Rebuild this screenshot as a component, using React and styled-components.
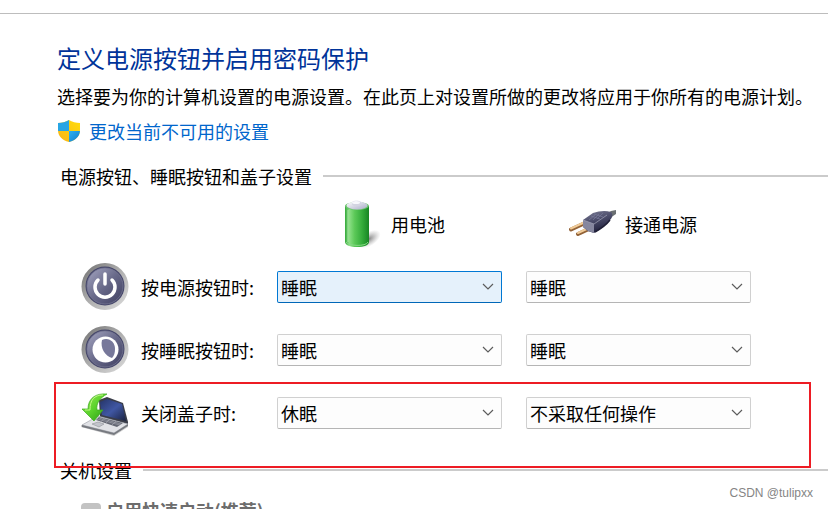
import React from "react";
import styled, { createGlobalStyle, css } from "styled-components";

const GlobalStyle = createGlobalStyle`
  * { box-sizing: border-box; }
  body {
    margin: 0;
    background: #fff;
    color: #000;
    font-family: "Noto Sans CJK SC", sans-serif;
    font-size: 18px;
    line-height: 24px;
  }
`;

const Window = styled.div`
  position: relative;
  height: 100vh;
  overflow: hidden;
`;

const TopBar = styled.header`
  height: 14px;
  border-bottom: 1px solid #bdbdbd;
`;

const Page = styled.main`
  display: flex;
  flex-direction: column;
  padding: 28px 0 0 57px;
`;

const Title = styled.h1`
  margin: 0;
  font-size: 24px;
  font-weight: 400;
  line-height: 32px;
  color: #003399;
`;

const Intro = styled.p`
  margin: 10px 0;
`;

const AdminLink = styled.a`
  display: flex;
  align-items: center;
  align-self: flex-start;
  gap: 8px;
  margin-top: 1px;
  color: #0066cc;
  text-decoration: none;
`;

const Section = styled.section`
  margin-top: 21px;
`;

const SectionHeading = styled.h2`
  display: flex;
  align-items: center;
  gap: 11px;
  margin: 0;
  padding-left: 3px;
  font-size: 18px;
  font-weight: 400;
  line-height: 24px;

  &::after {
    content: "";
    flex: 1;
    height: 2px;
    background: #cbcbcb;
  }
`;

const Settings = styled.div`
  display: flex;
  flex-direction: column;
  gap: 15px;
  margin-top: 12px;
  padding: 0 24px;
`;

const SettingRow = styled.div`
  position: relative;
  display: grid;
  grid-template-columns: 48px 124px minmax(0, 225px) minmax(0, 225px);
  column-gap: 12px;
  align-items: center;
  height: 48px;
`;

const SourceHeader = styled.div`
  grid-column: ${(p) => p.$column};
  display: flex;
  align-items: center;
  gap: 8px;
  padding-left: ${(p) => p.$inset}px;
  white-space: nowrap;
`;

const SecondField = styled.div`
  padding-left: 12px;
  margin-right: -12px;
`;

const SelectBox = styled.div`
  position: relative;
  display: flex;
  align-items: center;

  svg {
    position: absolute;
    right: 8px;
    pointer-events: none;
  }
`;

const Select = styled.select`
  appearance: none;
  width: 100%;
  height: 32px;
  padding: 0 28px 0 3px;
  border: 1px solid #d0d0d0;
  border-bottom-color: #b5b5b5;
  border-radius: 2px;
  background: #fdfdfd;
  color: #000;
  font: inherit;
  outline: none;
  ${(p) =>
    p.$active &&
    css`
      border-color: #0078d4;
      border-bottom-color: #0067b8;
      background: #e5f1fb;
    `}
`;

const Highlight = styled.div`
  position: absolute;
  top: -7px;
  left: -27px;
  right: -7px;
  height: 86px;
  border: 2px solid #ed1c24;
  pointer-events: none;
  z-index: 1;
`;

const CheckRow = styled.label`
  display: flex;
  align-items: center;
  gap: 5px;
  margin-top: 15px;
  padding-left: 24px;
  color: #6d6d6d;
  font-weight: 700;
`;

const Checkbox = styled.input`
  appearance: none;
  width: 20px;
  height: 20px;
  margin: 6px 0 0;
  border-radius: 4px;
  background: #c3c3c3;
`;

const Watermark = styled.span`
  position: absolute;
  right: 15px;
  bottom: 8px;
  color: #858585;
  font-family: "Liberation Sans", sans-serif;
  font-size: 12px;
  line-height: 16px;
`;

function ShieldIcon() {
  return (
    <svg width="24" height="24" viewBox="0 0 24 24" aria-hidden="true">
      <defs>
        <clipPath id="shield">
          <path d="M12 1c3 2 7 3 11 3v7c0 6-4 10-11 12C5 21 1 17 1 11V4c4 0 8-1 11-3z" />
        </clipPath>
        <linearGradient id="shieldBlue" x1="0" y1="0" x2="1" y2="1">
          <stop offset="0" stopColor="#2fb1ee" />
          <stop offset="1" stopColor="#0b78cc" />
        </linearGradient>
        <linearGradient id="shieldGold" x1="1" y1="0" x2="0" y2="1">
          <stop offset="0" stopColor="#ffdf0b" />
          <stop offset="1" stopColor="#f9b216" />
        </linearGradient>
      </defs>
      <g clipPath="url(#shield)">
        <path d="M0 0h24v24H0z" fill="url(#shieldGold)" />
        <path d="M0 0h12v12H0z" fill="#27a5e4" />
        <path d="M12 12h12v12H12z" fill="url(#shieldBlue)" />
      </g>
    </svg>
  );
}

function BatteryIcon() {
  return (
    <svg width="48" height="48" viewBox="0 0 48 48" aria-hidden="true">
      <defs>
        <linearGradient id="cell">
          <stop offset="0" stopColor="#35a83b" />
          <stop offset=".18" stopColor="#8bdf85" />
          <stop offset=".4" stopColor="#5cc958" />
          <stop offset=".72" stopColor="#33ab3a" />
          <stop offset="1" stopColor="#178524" />
        </linearGradient>
        <radialGradient id="cellShadow">
          <stop offset="0" stopColor="#666" stopOpacity=".8" />
          <stop offset="1" stopColor="#999" stopOpacity="0" />
        </radialGradient>
        <linearGradient id="cellCap" x2="1" y2="1">
          <stop offset="0" stopColor="#fff" />
          <stop offset="1" stopColor="#a9abc7" />
        </linearGradient>
      </defs>
      <ellipse cx="34" cy="39" rx="13" ry="7" transform="rotate(-32 34 39)" fill="url(#cellShadow)" />
      <path d="M10 6v36c0 3 5 5 12 5s12-2 12-5V6z" fill="url(#cell)" />
      <ellipse cx="22" cy="6" rx="12" ry="4" fill="#6cc46e" />
      <ellipse cx="22" cy="5.5" rx="10.5" ry="4" fill="url(#cellCap)" />
      <path d="M17 2.5c0-2.5 9-2.5 9 0v2c-1 2-8 2-9 0z" fill="#d3d4e2" />
      <ellipse cx="21" cy="2.5" rx="4" ry="1.5" fill="#f7f7fc" />
      <path d="M13 10v32" stroke="#c9f5c3" strokeWidth="1" opacity=".6" />
      <path d="M11 42c2 4 20 5 22 0" fill="none" stroke="#85d884" strokeWidth="1" />
    </svg>
  );
}

function PlugIcon() {
  return (
    <svg width="48" height="48" viewBox="0 0 48 48" aria-hidden="true">
      <defs>
        <linearGradient id="plugBody" x1="0" y1="0" x2=".4" y2="1">
          <stop offset="0" stopColor="#7f8098" />
          <stop offset=".5" stopColor="#4c4d6b" />
          <stop offset="1" stopColor="#21213d" />
        </linearGradient>
      </defs>
      <path d="M37 14l5-3 5-1v4l-6 4z" fill="#6b7072" />
      <path d="M2 29.500l13-6M9 34l13-6" stroke="#926237" strokeWidth="4" strokeLinecap="round" />
      <path d="M2 28.500l13-6M9 33l13-6" stroke="#f0cb98" strokeWidth="2" strokeLinecap="round" />
      <path d="M14 20l10-7c6-2 12-3 18-1 2 2 2 5-1 8-4 5-9 9-16 13l-6-2-5-4z" fill="url(#plugBody)" />
      <path d="M14 20l11 4v9l-6-2-5-4z" fill="#85869e" />
      <path d="M14 20l11 4 13-9" fill="none" stroke="#a4a5b9" strokeWidth=".7" />
      <path d="M26 15l-6 5M30 14l-6 6M34 13l-6 6M22 16l9 3M25 14l9 3" stroke="#77789a" strokeWidth=".7" />
      <path d="M26 32c7-4 12-8 15-12" fill="none" stroke="#202037" strokeWidth="1.5" />
    </svg>
  );
}

function RoundIcon({ id, children }) {
  return (
    <svg width="48" height="48" viewBox="0 0 48 48" aria-hidden="true">
      <defs>
        <linearGradient id={`${id}Rim`} x1="0" y1="0" x2="1" y2="1">
          <stop offset="0" stopColor="#6e6e6e" />
          <stop offset=".45" stopColor="#aaa" />
          <stop offset="1" stopColor="#dedede" />
        </linearGradient>
        <linearGradient id={`${id}Face`} x1="0" y1="0" x2="1" y2="1">
          <stop offset="0" stopColor="#a5a6c2" />
          <stop offset=".5" stopColor="#686989" />
          <stop offset="1" stopColor="#3f3f61" />
        </linearGradient>
      </defs>
      <circle cx="24" cy="23.5" r="23.5" fill={`url(#${id}Rim)`} />
      <circle cx="24" cy="23" r="19.5" fill="#45466a" />
      <circle cx="24" cy="23" r="18" fill={`url(#${id}Face)`} stroke="#777994" strokeWidth=".7" />
      {children}
    </svg>
  );
}

function PowerIcon() {
  return (
    <RoundIcon id="power">
      <path d="M17 17a10 10 0 1 0 14 0" fill="none" stroke="#fff" strokeWidth="3.500" strokeLinecap="round" />
      <path d="M24 11v10" stroke="#fff" strokeWidth="3.500" strokeLinecap="round" />
    </RoundIcon>
  );
}

function SleepIcon() {
  return (
    <RoundIcon id="sleep">
      <circle cx="24.5" cy="23.5" r="13" fill="#fff" />
      <path d="M21 14c7-3 13 2 13 9 0 4-1 7-3 9-7-2-12-10-10-18z" fill="#77789a" />
    </RoundIcon>
  );
}

function LidIcon() {
  return (
    <svg width="48" height="48" viewBox="0 0 48 48" aria-hidden="true">
      <defs>
        <linearGradient id="lidScreen" x1="0" y1="0" x2="1" y2="1">
          <stop offset="0" stopColor="#253467" />
          <stop offset=".5" stopColor="#4057a3" />
          <stop offset="1" stopColor="#19213f" />
        </linearGradient>
        <linearGradient id="lidArrow" x1="0" y1="0" x2="1" y2="1">
          <stop offset="0" stopColor="#9aed54" />
          <stop offset=".5" stopColor="#5bd22c" />
          <stop offset="1" stopColor="#259613" />
        </linearGradient>
      </defs>
      <path d="M0 38l33 9 14-9v-2L0 36z" fill="#999" opacity=".45" />
      <path d="M18 11l8-3 16 6 5 19v2l-28-7z" fill="#393c48" />
      <path d="M19 13l7-3 15 5 4 17-24-6z" fill="url(#lidScreen)" />
      <path d="M1 36l16-9 30 8-14 9z" fill="#e2e3e7" stroke="#9698a1" strokeWidth=".6" />
      <path d="M15 31l3-3 24 6-6 4z" fill="#646773" />
      <path d="M16 30l23 6M18 29l22 6M20 33l3-4M25 34l4-4M31 36l4-4" stroke="#a8aab3" strokeWidth=".6" />
      <path d="M11 35l6-2 6 2-5 3z" fill="#c2c4cb" stroke="#85878d" strokeWidth=".5" />
      <path d="M1 36l32 8 14-9v2l-14 9L1 38z" fill="#777a80" />
      <path d="M26 5C15 4 7 9 7 20H1l12 12 9-11h-6c-1-7 3-12 10-16z" fill="url(#lidArrow)" stroke="#3ba91e" strokeWidth=".7" />
      <path d="M22 6C13 6 9 11 9 21H4" fill="none" stroke="#bdf783" strokeWidth="1" />
    </svg>
  );
}

function Dropdown({ label, value, active }) {
  return (
    <SelectBox>
      <Select aria-label={label} defaultValue={value} $active={active}>
        {["不采取任何操作", "睡眠", "休眠", "关机"].map((o) => (
          <option key={o}>{o}</option>
        ))}
      </Select>
      <svg width="12" height="12" viewBox="0 0 12 12" aria-hidden="true">
        <path d="M1 3l5 5 5-5" fill="none" stroke="#5c5c5c" strokeWidth="1.2" />
      </svg>
    </SelectBox>
  );
}

const rows = [
  { label: "按电源按钮时:", Icon: PowerIcon, battery: "睡眠", plugged: "睡眠", active: true },
  { label: "按睡眠按钮时:", Icon: SleepIcon, battery: "睡眠", plugged: "睡眠" },
  { label: "关闭盖子时:", Icon: LidIcon, battery: "休眠", plugged: "不采取任何操作", marked: true },
];

export default function App() {
  return (
    <Window>
      <GlobalStyle />
      <TopBar />
      <Page>
        <Title>定义电源按钮并启用密码保护</Title>
        <Intro>选择要为你的计算机设置的电源设置。在此页上对设置所做的更改将应用于你所有的电源计划。</Intro>
        <AdminLink href="#settings">
          <ShieldIcon />
          更改当前不可用的设置
        </AdminLink>
        <Section id="settings">
          <SectionHeading>电源按钮、睡眠按钮和盖子设置</SectionHeading>
          <Settings>
            <SettingRow>
              <SourceHeader $column={3} $inset={58}>
                <BatteryIcon />
                用电池
              </SourceHeader>
              <SourceHeader $column={4} $inset={55}>
                <PlugIcon />
                接通电源
              </SourceHeader>
            </SettingRow>
            {rows.map(({ label, Icon, battery, plugged, active, marked }) => (
              <SettingRow key={label}>
                <Icon />
                <span>{label}</span>
                <Dropdown label={`${label} 用电池`} value={battery} active={active} />
                <SecondField>
                  <Dropdown label={`${label} 接通电源`} value={plugged} />
                </SecondField>
                {marked && <Highlight />}
              </SettingRow>
            ))}
          </Settings>
        </Section>
        <Section>
          <SectionHeading>关机设置</SectionHeading>
          <CheckRow>
            <Checkbox type="checkbox" disabled />
            启用快速启动(推荐)
          </CheckRow>
        </Section>
      </Page>
      <Watermark>CSDN @tulipxx</Watermark>
    </Window>
  );
}
